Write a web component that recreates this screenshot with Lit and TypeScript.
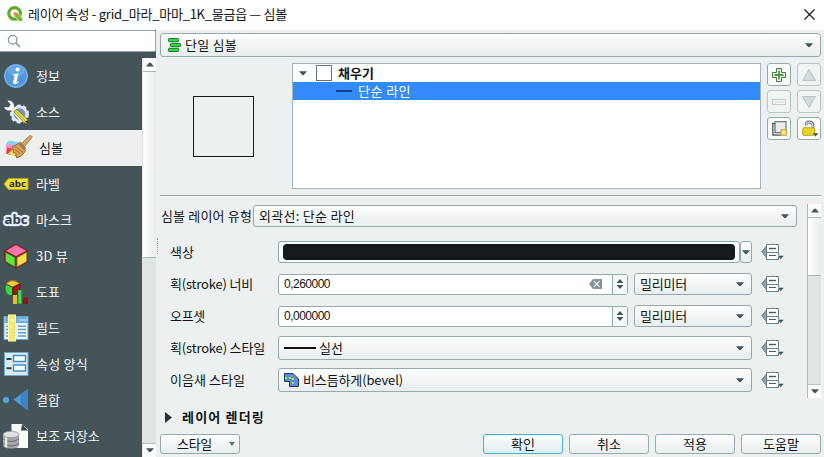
import { LitElement, html, css, svg, nothing } from "lit";
import { customElement, property } from "lit/decorators.js";
import { classMap } from "lit/directives/class-map.js";

/** A label whose tracking is adjusted so that the run takes the given width. */
@customElement("fit-text")
class FitText extends LitElement {
  @property() text = "";
  @property({ type: Number }) w = 0;
  static styles = css`
    :host { display: inline-block; white-space: pre; flex: none; }
    .run { display: inline-block; }
  `;
  render() { return html`<span class="run">${this.text}</span>`; }
  updated() {
    const run = this.renderRoot.querySelector(".run") as HTMLElement;
    run.style.letterSpacing = "0px";
    const natural = run.getBoundingClientRect().width;
    if (this.w && this.text.length) {
      run.style.letterSpacing = `${(this.w - natural) / this.text.length}px`;
    }
  }
}

const t = (text: string, w: number) => html`<fit-text .text=${text} .w=${w}></fit-text>`;
const icon = (w: number, h: number, body: unknown) =>
  html`<svg width=${w} height=${h} viewBox="0 0 ${w} ${h}">${body}</svg>`;

const arrowDown = icon(8, 5, svg`<path d="M0 .3H8L5.2 3.6Q4 4.8 2.8 3.6Z" fill="#43545a"/>`);
const arrowUp = icon(8, 5, svg`<path d="M0 4.5H8L5.2 1.2Q4 0 2.8 1.2Z" fill="#43545a"/>`);

const icons: Record<string, unknown> = {
  info: svg`<circle cx="13" cy="13" r="12" fill="#5297dc"/><circle cx="13" cy="13" r="11.2" fill="none" stroke="#8bbcf0"/>
    <ellipse cx="13" cy="8" rx="8.5" ry="5.5" fill="#79b0ea" opacity=".55"/>
    <circle cx="14.6" cy="6.6" r="2" fill="#fff"/><path d="M10.3 11.2L15.6 10.4L13.7 18.4Q13.6 19.6 15.4 18.3L15.8 19Q13.4 21.4 11.4 21.2Q9.6 20.8 10.2 18.5L11.6 12.6L10 12.2Z" fill="#fff"/>`,
  source: svg`<circle cx="16.5" cy="15" r="8.5" fill="#dfe9f5" stroke="#dfe9f5" stroke-width="2" stroke-dasharray="3.6 2.6"/>
    <circle cx="16.5" cy="15" r="5.8" fill="#6f93c8"/>
    <path d="M8 8L20 22" stroke="#f4f5f3" stroke-width="4.6"/><path d="M4.5 1.8A5 5 0 1 1 1.2 8.2L5.8 8.2L7.6 5.4Z" fill="#fff"/>
    <path d="M10.5 12.5L14 10.5L25 21.2L24.8 24.6L21.4 23.8Z" fill="#efe43a" stroke="#777427" stroke-width=".8"/><path d="M12.3 11.6L23.2 22.8" stroke="#aaa13a"/><path d="M22 22L25 21.5L24.8 24.8Z" fill="#282b20"/>`,
  symbol: svg`<g transform="translate(4 0)"><path d="M2 5.5L17 8L13 13L-1 9Z" fill="#7fd6ee"/><path d="M-1 9L12 11L9 15L-1 13.5Z" fill="#f78ed5"/><path d="M0 12.5L9 14.5L4 20L-1 18.5Z" fill="#f43b48"/><path d="M1 18.5L7 13L14 15L9 22Z" fill="#f7e25a"/>
    <path d="M5.5 11.5L11.5 8.5L18.6 15.8Q15 22 9.5 23Q11 20 8.5 21Q10 17 6.5 18Z" fill="#d9a15d" stroke="#8b5b2a" stroke-width=".8"/><path d="M8 12L16 17M8 14.5L13 18.5" stroke="#9a6731" stroke-width=".8"/>
    <path d="M10.8 8.8L13.6 6.8L19 13L18 15.7Z" fill="#a77c4b"/><path d="M14.6 8.3L22.6 .8Q24.5 0 25.1 1.7Q25.2 2.7 24.2 3.5L17.6 11.6Z" fill="#d8a566" stroke="#986b38" stroke-width=".7"/></g>`,
  label: svg`<path d="M1 13L5.5 7.5H25V18.5H5.5Z" fill="#f0df39" stroke="#b4a31d"/><text x="6" y="16.4" font-family="Open Sans" font-weight="700" font-size="9.5" fill="#292b27" textLength="17" lengthAdjust="spacingAndGlyphs">abc</text>`,
  mask: svg`<text x="1.6" y="17.2" font-family="Open Sans" font-weight="700" font-size="13" textLength="23" lengthAdjust="spacingAndGlyphs" fill="#37414c" stroke="#e4eefc" stroke-width="4.4" stroke-linejoin="round" paint-order="stroke">abc</text>`,
  view: svg`<path d="M13 .7L25 7.5V19L13 26L1.2 19V7.5Z" fill="#7e1823"/><path d="M13 2L23.2 7.7L13 13.2L3 7.7Z" fill="#ff75a7"/><path d="M2.5 9.3L12 14.6V24L2.5 18.4Z" fill="#64e23b" stroke="#2c8924"/><path d="M23.8 9.3L14 14.6V24L23.8 18.4Z" fill="#f6df4c" stroke="#927a18"/>`,
  chart: svg`<path d="M3 5Q9-1.6 16.7 4.5L9.7 8.2Z" fill="#f5c637" stroke="#91751c"/><path d="M2.5 5.2L9.7 8.4V17Q0 16.7 2.5 5.2Z" fill="#3fd648" stroke="#1e6c26"/><path d="M10 8.5L17 5Q19.2 12 10 17Z" fill="#ad1717" stroke="#5d1116"/><rect x="10" y="16" width="4" height="9" fill="#f4b62c"/><rect x="15" y="11" width="3.8" height="14" fill="#48dd55" stroke="#247835" stroke-width=".7"/><rect x="20" y="18.5" width="5" height="6.5" fill="#981116"/>`,
  fields: svg`<rect x="1" y="1.5" width="24" height="23" fill="#edf5fa" stroke="#69a3c7"/><path d="M1.5 2H24.5V8H1.5Z" fill="#72aede"/><path d="M16 5H24" stroke="#c9e5f8"/><path d="M3 11.3H6M15 11.3H23M3 14.5H6M15 14.5H23M3 17.7H6M15 17.7H23M3 20.9H6M15 20.9H23" stroke="#66a1ca" stroke-width="1.5"/><rect x="5.5" y="0" width="7" height="26" fill="#f1ea77" stroke="#fff7a9"/><circle cx="9.3" cy="5" r="1.1" fill="#fff"/><path d="M11 8V23" stroke="#c7bf55" stroke-dasharray="1 2"/>`,
  form: svg`<rect x="1.5" y="1.5" width="23.5" height="23" fill="#dcebf5" stroke="#6ea9ce"/><path d="M3.5 8H8.5M3.5 17.2H8.5" stroke="#2c414f" stroke-width="2"/><rect x="10.5" y="4.5" width="12" height="6" fill="#f7fbfd" stroke="#478ebc" stroke-width="1.5"/><rect x="10.5" y="14" width="12" height="6" fill="#f7fbfd" stroke="#478ebc" stroke-width="1.5"/>`,
  join: svg`<circle cx="3" cy="13" r="3" fill="#5aa4e0"/><path d="M10.5 12.5L25 2V23.5Z" fill="#4f98da"/><path d="M18 7L25 2V23.5L18 18Z" fill="#3d83c8"/>`,
  storage: svg`<path d="M8.5 1H19L25 6.5V25H8.5Z" fill="#fbfbfb"/><path d="M19 1L18 7.5H25Z" fill="#35464e"/><path d="M0 11.5V22Q0 25.5 8 25.5T16 22V11.5Z" fill="#a4a7a6"/><ellipse cx="8" cy="11.5" rx="8" ry="3.2" fill="#e2e3e1" stroke="#878b89" stroke-width=".7"/><path d="M0 16Q8 21 16 16M0 20.5Q8 25.5 16 20.5" fill="none" stroke="#656a69" stroke-width="1"/><path d="M3 14.5V24.2" stroke="#e6e8e7" stroke-width="2.5"/>`,
};

const menu: [string, string, number][] = [
  ["info", "정보", 24], ["source", "소스", 24], ["symbol", "심볼", 24], ["label", "라벨", 24],
  ["mask", "마스크", 36], ["view", "3D 뷰", 32], ["chart", "도표", 24], ["fields", "필드", 24],
  ["form", "속성 양식", 52], ["join", "결합", 24], ["storage", "보조 저장소", 64],
];

const override = icon(24, 20, svg`<path d="M6 3.2V16.3L.8 9.7Z" fill="#8b9ea3" stroke="#5f7379" stroke-width=".8"/>
  <path d="M5.5 2.5H17.5V17.5H5.5Z" fill="#fbfcfc" stroke="#6e8389"/><path d="M6 10.5H18" stroke="#6e8389"/>
  <path d="M8 6.5H15" stroke="#465960" stroke-width="1.4"/><path d="M8 13.5H15" stroke="#465960"/>
  <path d="M16.2 13.5H23.2L19.7 17.4Z" fill="#43545a" stroke="#edf1f1" stroke-width=".5"/>`);

const bar = (cls: string) => html`<div class="sb ${cls}">
  <div class="cap first">${arrowUp}</div><div class="thumb"></div><div class="track"></div><div class="cap last">${arrowDown}</div>
</div>`;

@customElement("app-root")
class AppRoot extends LitElement {
  static styles = css`
    :host { display: block; width: 824px; height: 457px; overflow: hidden; background: #ecf0f0; color: #101416;
      font: 13px/18px "Noto Sans CJK KR", sans-serif; }
    * { box-sizing: border-box; }
    svg { display: block; flex: none; overflow: visible; }
    .title { height: 30px; background: #fff; display: flex; align-items: center; padding: 0 9px 2px 7px; font-size: 13px; }
    .title .name { margin-left: 5px; flex: 1; }
    .cols { display: grid; grid-template-columns: 156px 4px 661px; height: 427px; }
    .side { background: #455459; display: flex; flex-direction: column; }
    .search { height: 22px; background: #fff; border: 1px solid #92a7ad; border-left: 0; border-radius: 0 2px 2px 0; padding: 3px 0 0 7px; }
    .sidebody { display: flex; margin-top: 6px; height: 399px; overflow: hidden; }
    .list { flex: 1; overflow: hidden; }
    .item { height: 36px; display: flex; align-items: center; padding-left: 3px; color: #f2f5f5; }
    .item fit-text { margin-left: 7px; }
    .item.on { background: #eef0f0; color: #101416; }
    .item.on fit-text { margin-left: 10px; }
    .sb { width: 14px; display: flex; flex-direction: column; border-left: 1px solid #a9babd; background: #dfe5e5; flex: none; }
    .cap { height: 14px; background: #fbfcfc; display: flex; align-items: center; justify-content: center; flex: none; }
    .cap.first { border-bottom: 1px solid #a9babd; }
    .cap.last { border-top: 1px solid #b4c3c5; }
    .thumb { background: linear-gradient(90deg, #fff, #e9eded); border-bottom: 1px solid #a9babd; flex: none; }
    .track { flex: 1; }
    .sb.nav { border-left-color: #dfe5e5; }
    .nav .thumb { height: 186px; }
    .form .thumb { height: 58px; }
    .grip { margin: 208px 0 0 1px; height: 16px; border-left: 1px dotted #9cabad; }
    .main { padding-top: 3px; display: flex; flex-direction: column; }
    .box { border: 1px solid #94aab0; border-radius: 3px; background: linear-gradient(#fefefe, #e9eded); display: flex; align-items: center; }
    .combo { padding: 0 7px 0 5px; }
    .combo .val { flex: 1; display: flex; align-items: center; }
    .renderer { height: 24px; padding-left: 7px; }
    .renderer fit-text { margin-left: 4px; }
    .renderer .val { padding-bottom: 1px; }
    .upper { display: grid; grid-template-columns: 132px 469px 54px; column-gap: 0; height: 126px; margin-top: 6px; }
    .preview { width: 61px; height: 61px; border: 1px solid #14191b; margin: 33px 0 0 33px; }
    .tree { background: #fff; border: 1px solid #a0b4b9; }
    .node { height: 18px; display: flex; align-items: center; }
    .node.root { padding-left: 6px; font-weight: 700; }
    .node.root .check { width: 16px; height: 16px; border: 1px solid #65767b; background: #fff; margin: 0 6px 0 9px; }
    .node.leaf { background: #338bfb; color: #fff; padding-left: 43px; height: 18px; }
    .node .dash { width: 16px; height: 2px; background: #153f8f; margin-right: 6px; }
    .tools { display: grid; grid-template: repeat(3, 23px) / 24px 24px; gap: 4px 6px; margin-left: 6px; }
    .tools .box { justify-content: center; background: #fafcfc; }
    .tools .off { border-color: #b8c6c8; background: #f1f4f4; }
    .rule { height: 2px; background: #91a7ac; border-bottom: 1px solid #f8fafa; margin-top: 6px; flex: none; }
    .formwrap { display: flex; justify-content: space-between; height: 194px; margin-top: 7px; }
    .type { display: flex; align-items: center; height: 22px; margin: 1px 0 0 1px; }
    .type .box { width: 544px; height: 22px; margin-left: 1px; }
    .lead { width: 91px; display: flex; }
    .rows { margin-top: 9px; }
    .row { display: grid; grid-template-columns: 108px 474px 24px; column-gap: 0; height: 32px; align-items: center; padding-left: 10px; }
    .row .ed { display: flex; align-items: center; }
    .row > svg { margin-left: 9px; }
    .color { width: 462px; height: 22px; padding: 2px 4px; background: #fafcfc; }
    .swatch { width: 452px; height: 16px; background: #14191b; border-radius: 4px; }
    .drop { width: 12px; height: 22px; margin-left: 0; justify-content: center; }
    .num { width: 350px; height: 21px; background: #fff; padding-left: 5px; font: 12px/18px "Liberation Sans", sans-serif; }
    .num .val { flex: 1; }
    .clear { margin-right: 10px; }
    .spin { width: 15px; height: 19px; border-left: 1px solid #94aab0; display: flex; flex-direction: column; align-items: center; justify-content: center; gap: 2px; background: #f6f8f8; border-radius: 0 2px 2px 0; }
    .unit { width: 118px; height: 22px; margin-left: 6px; }
    .wide { width: 474px; height: 24px; }
    .line { width: 32px; height: 2px; background: #101416; margin-right: 3px; }
    .wide svg { margin-right: 4px; }
    .wide > svg, .unit > svg { margin-right: 0; }
    .group { height: 18px; display: flex; align-items: center; margin-top: 10px; padding-left: 5px; font-weight: 700; gap: 10px; }
    .foot { display: flex; gap: 6px; margin-top: 8px; }
    .btn { width: 80px; height: 20px; justify-content: center; padding-bottom: 1px; }
    .style { margin-right: auto; justify-content: space-between; padding: 0 4px 1px 16px; }
    .btn.ok { border-color: #42b3dc; background: linear-gradient(#fafdfe, #e2edf0); }
  `;

  private row(label: unknown, editor: unknown) {
    return html`<div class="row">${label}<div class="ed">${editor}</div>${override}</div>`;
  }

  private number(value: string, clear: boolean) {
    return html`<div class="box num"><span class="val">${t(value, 46)}</span>
      ${clear ? html`<span class="clear">${icon(13, 10, svg`<path d="M4 0H13V10H4L0 5Z" fill="#80949a"/><path d="M5 2.2L10.5 7.8M10.5 2.2L5 7.8" stroke="#fff" stroke-width="1.1"/>`)}</span>` : nothing}
      <div class="spin">${icon(8, 4, svg`<path d="M.5 4L4 0L7.5 4Z" fill="#43545a"/>`)}${icon(8, 4, svg`<path d="M.5 0L4 4L7.5 0Z" fill="#43545a"/>`)}</div></div>
      <div class="box combo unit"><span class="val">${t("밀리미터", 47)}</span>${arrowDown}</div>`;
  }

  render() {
    return html`
      <div class="title">
        ${icon(16, 16, svg`<circle cx="7.6" cy="7.4" r="5.8" fill="none" stroke="#63a82f" stroke-width="3.2"/><path d="M7.3 7H10.6L15.6 12.2V15.6H12.4L7.3 10.2Z" fill="#7bbb3c" stroke="#fff" stroke-width=".6"/><path d="M6.5 6.2H9.4L11.4 8.2L8.4 9.8L6.5 8.6Z" fill="#ee853c"/>`)}
        <span class="name">${t("레이어 속성 - grid_마라_마마_1K_물금읍 — 심볼", 259)}</span>
        ${icon(11, 11, svg`<path d="M.5 .5L10.5 10.5M10.5 .5L.5 10.5" stroke="#15191b" stroke-width="1.2"/>`)}
      </div>
      <div class="cols">
        <div class="side">
          <div class="search">${icon(14, 14, svg`<circle cx="5.7" cy="5.7" r="4.3" fill="none" stroke="#82979d" stroke-width="1.3"/><path d="M9 9L13 13" stroke="#82979d" stroke-width="1.7"/>`)}</div>
          <div class="sidebody">
            <div class="list">${menu.map(([id, text, w]) => html`
              <div class=${classMap({ item: true, on: id === "symbol" })}>${icon(26, 26, icons[id])}${t(text, w)}</div>`)}
            </div>
            ${bar("nav")}
          </div>
        </div>
        <div class="grip"></div>
        <div class="main">
          <div class="box combo renderer"><span class="val">
            ${icon(13, 14, svg`<g fill="#3bd24c" stroke="#147a2b"><rect x=".5" y=".5" width="10" height="3.2" rx=".8"/><rect x="2.5" y="5.4" width="10" height="3.2" rx=".8"/><rect x=".5" y="10.3" width="10" height="3.2" rx=".8"/></g>`)}
            ${t("단일 심볼", 52)}</span>${arrowDown}</div>
          <div class="upper">
            <div class="preview"></div>
            <div class="tree">
              <div class="node root">${arrowDown}<span class="check"></span>${t("채우기", 36)}</div>
              <div class="node leaf"><span class="dash"></span>${t("단순 라인", 53)}</div>
            </div>
            <div class="tools">
              <div class="box">${icon(14, 14, svg`<path d="M4.5 .5H9.5V4.5H13.5V9.5H9.5V13.5H4.5V9.5H.5V4.5H4.5Z" fill="#f4faf2" stroke="#367e35"/><path d="M7 2.5V11.5M2.5 7H11.5" stroke="#4a9840" stroke-width="1.8"/>`)}</div>
              <div class="box off">${icon(14, 12, svg`<path d="M7 .5L13.5 11.5H.5Z" fill="#d2dadd" stroke="#b9c4c8"/>`)}</div>
              <div class="box off">${icon(14, 6, svg`<rect x=".5" y=".5" width="13" height="5" fill="#f3f2f5" stroke="#cbc9d2"/><path d="M2.5 3H11.5" stroke="#d7d5dd"/>`)}</div>
              <div class="box off">${icon(14, 12, svg`<path d="M7 11.5L13.5 .5H.5Z" fill="#d2dadd" stroke="#b9c4c8"/>`)}</div>
              <div class="box">${icon(15, 15, svg`<path d="M3 2.5H.8V14.2H10V12" fill="#dfe4e5" stroke="#4f6167" stroke-width="1.3"/><rect x="3" y=".7" width="11" height="11" fill="#e7ebeb" stroke="#4f6167"/><rect x="9" y="8.8" width="5.5" height="5.5" fill="#f4e389" stroke="#c5a62d"/>`)}</div>
              <div class="box">${icon(15, 15, svg`<path d="M4 4.6Q4 1 7.3 1Q11 1 11 5V7" fill="none" stroke="#697a80" stroke-width="2.8"/><path d="M4 4.6Q4 1 7.3 1Q11 1 11 5V7" fill="none" stroke="#e9eded" stroke-width="1"/><rect x=".8" y="6.8" width="12" height="7.5" rx="1" fill="#ead326" stroke="#bba019"/><path d="M10.7 12.2H16.5L13.6 15.4Z" fill="#43545a"/>`)}</div>
            </div>
          </div>
          <div class="rule"></div>
          <div class="formwrap">
            <div>
              <div class="type"><span class="lead">${t("심볼 레이어 유형", 91)}</span>
                <div class="box combo"><span class="val">${t("외곽선: 단순 라인", 96)}</span>${arrowDown}</div></div>
              <div class="rows">
                ${this.row(t("색상", 24), html`<div class="box color"><div class="swatch"></div></div><div class="box drop">${arrowDown}</div>`)}
                ${this.row(t("획(stroke) 너비", 83), this.number("0,260000", true))}
                ${this.row(t("오프셋", 35), this.number("0,000000", false))}
                ${this.row(t("획(stroke) 스타일", 95), html`<div class="box combo wide"><span class="val"><span class="line"></span>${t("실선", 24)}</span>${arrowDown}</div>`)}
                ${this.row(t("이음새 스타일", 75), html`<div class="box combo wide"><span class="val">${icon(15, 14, svg`<path d="M.5 .5H9L14.5 6V13.5H5.5V8.5H.5Z" fill="#5b8ddd" stroke="#263958"/><path d="M1 5H9V13" fill="none" stroke="#b6ed31" stroke-width="1.8" stroke-dasharray="2 2"/>`)}${t("비스듬하게(bevel)", 100)}</span>${arrowDown}</div>`)}
              </div>
            </div>
            ${bar("form")}
          </div>
          <div class="group">${icon(7, 11, svg`<path d="M0 0L7 5.5L0 11Z" fill="#263338"/>`)}${t("레이어 렌더링", 83)}</div>
          <div class="foot">
            <div class="box btn style">${t("스타일", 35)}${icon(6, 4, svg`<path d="M0 0H6L3 4Z" fill="#5d7076"/>`)}</div>
            <div class="box btn ok">${t("확인", 24)}</div>
            <div class="box btn">${t("취소", 24)}</div>
            <div class="box btn">${t("적용", 24)}</div>
            <div class="box btn">${t("도움말", 36)}</div>
          </div>
        </div>
      </div>`;
  }
}
